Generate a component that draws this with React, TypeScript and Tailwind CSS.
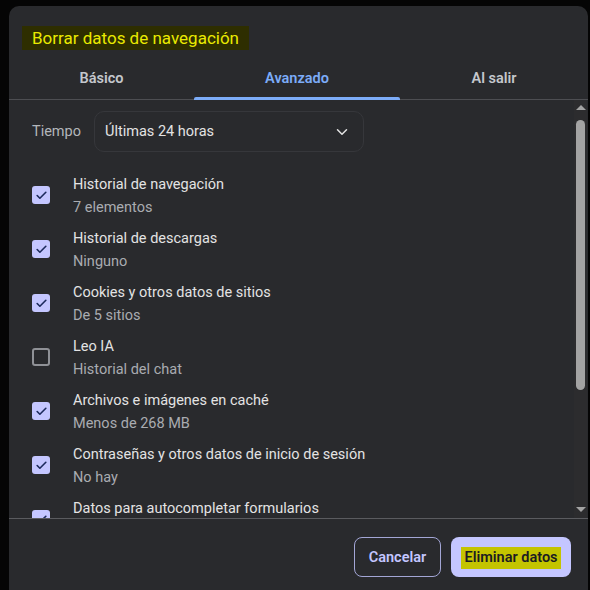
import { Check, ChevronDown } from "lucide-react";

const items = [
    { title: "Historial de navegación", sub: "7 elementos", checked: true },
    { title: "Historial de descargas", sub: "Ninguno", checked: true },
    { title: "Cookies y otros datos de sitios", sub: "De 5 sitios", checked: true },
    { title: "Leo IA", sub: "Historial del chat", checked: false },
    { title: "Archivos e imágenes en caché", sub: "Menos de 268 MB", checked: true },
    { title: "Contraseñas y otros datos de inicio de sesión", sub: "No hay", checked: true },
    { title: "Datos para autocompletar formularios", sub: "", checked: true },
];

function CheckRow({ title, sub, checked }: { title: string; sub: string; checked: boolean }) {
    return (
        <div className="flex items-center h-[54px] shrink-0">
            {checked ? (
                <div className="w-[18px] h-[18px] rounded-[3px] bg-[#c4c6ff] flex items-center justify-center shrink-0">
                    <Check size={13} strokeWidth={3} className="text-[#1c2a5c]" />
                </div>
            ) : (
                <div className="w-[18px] h-[18px] rounded-[3px] border-2 border-[#8f9196] shrink-0" />
            )}
            <div className="ml-[23px] pt-[2px] flex flex-col gap-[3px]">
                <span className="h-[20px] text-[14.5px] leading-[20px] text-[#e3e3e3]">{title}</span>
                <span className="h-[20px] text-[14.5px] leading-[20px] text-[#a9acb1]">{sub}</span>
            </div>
        </div>
    );
}

export default function App() {
    return (
        <div
            className="w-[590px] h-[590px] bg-[#050505] pt-[6px] pl-[9px] overflow-hidden"
            style={{ fontFamily: "Roboto, 'Noto Sans', sans-serif" }}
        >
            <div className="w-[579px] h-[584px] bg-[#292a2d] rounded-t-[10px] flex flex-col">
                {/* Title */}
                <div className="pt-[20px] pl-[23px] h-[44px]">
                    <span className="inline-block bg-[#2e2e00] px-[10px] -ml-[10px] text-[17px] leading-[24px] text-[#eaea00]">
                        Borrar datos de navegación
                    </span>
                </div>

                {/* Tabs */}
                <div className="flex h-[50px] border-b border-[#4d4e52]">
                    <div className="w-[185px] flex items-center justify-center pt-[8px] text-[14.5px] font-semibold text-[#c4c7cc]">
                        Básico
                    </div>
                    <div className="relative w-[206px] flex items-center justify-center pt-[8px] text-[14.5px] font-semibold text-[#7cacf8]">
                        Avanzado
                        <div className="absolute left-0 right-0 -bottom-px h-[3px] rounded-t-[2px] bg-[#7cacf8]" />
                    </div>
                    <div className="flex-1 flex items-center justify-center pt-[8px] text-[14.5px] font-semibold text-[#c4c7cc]">
                        Al salir
                    </div>
                </div>

                {/* Scroll area */}
                <div className="flex h-[419px] border-b border-[#5a5b5f]">
                    <div className="flex-1 overflow-hidden pl-[23px] pt-[11px] flex flex-col">
                        <div className="flex items-center h-[41px] shrink-0">
                            <span className="text-[14.5px] text-[#b3b6bb] w-[62px]">Tiempo</span>
                            <div className="w-[270px] h-[41px] rounded-[10px] border border-[#36373b] flex items-center justify-between pl-[10px] pr-[12px]">
                                <span className="text-[14.5px] text-[#e3e3e3]">Últimas 24 horas</span>
                                <ChevronDown size={18} strokeWidth={2} className="text-[#e3e3e3]" />
                            </div>
                        </div>
                        <div className="h-[16px] shrink-0" />
                        {items.map((it) => (
                            <CheckRow key={it.title} {...it} />
                        ))}
                    </div>

                    {/* Scrollbar */}
                    <div className="w-[13px] mr-[1px] bg-[#2c2c2e] flex flex-col items-center">
                        <div className="mt-[5px] w-0 h-0 border-l-[5px] border-r-[5px] border-b-[5px] border-l-transparent border-r-transparent border-b-[#a3a3a3]" />
                        <div className="mt-[10px] w-[9px] h-[270px] rounded-full bg-[#a3a3a3]" />
                        <div className="mt-auto mb-[6px] w-0 h-0 border-l-[5px] border-r-[5px] border-t-[5px] border-l-transparent border-r-transparent border-t-[#a3a3a3]" />
                    </div>
                </div>

                {/* Footer */}
                <div className="flex justify-end gap-[10px] pt-[18px] pr-[17px]">
                    <button className="w-[87px] h-[40px] pt-[2px] rounded-[8px] border border-[#a3a6d6] text-[14.5px] font-semibold text-[#c4c6ff]">
                        Cancelar
                    </button>
                    <button className="w-[120px] h-[40px] pt-[2px] rounded-[8px] bg-[#c4c6ff] flex items-center justify-center">
                        <span className="bg-[#c4c400] px-[3px] text-[14.5px] font-semibold text-[#1b1b22]">
                            Eliminar datos
                        </span>
                    </button>
                </div>
            </div>
        </div>
    );
}
